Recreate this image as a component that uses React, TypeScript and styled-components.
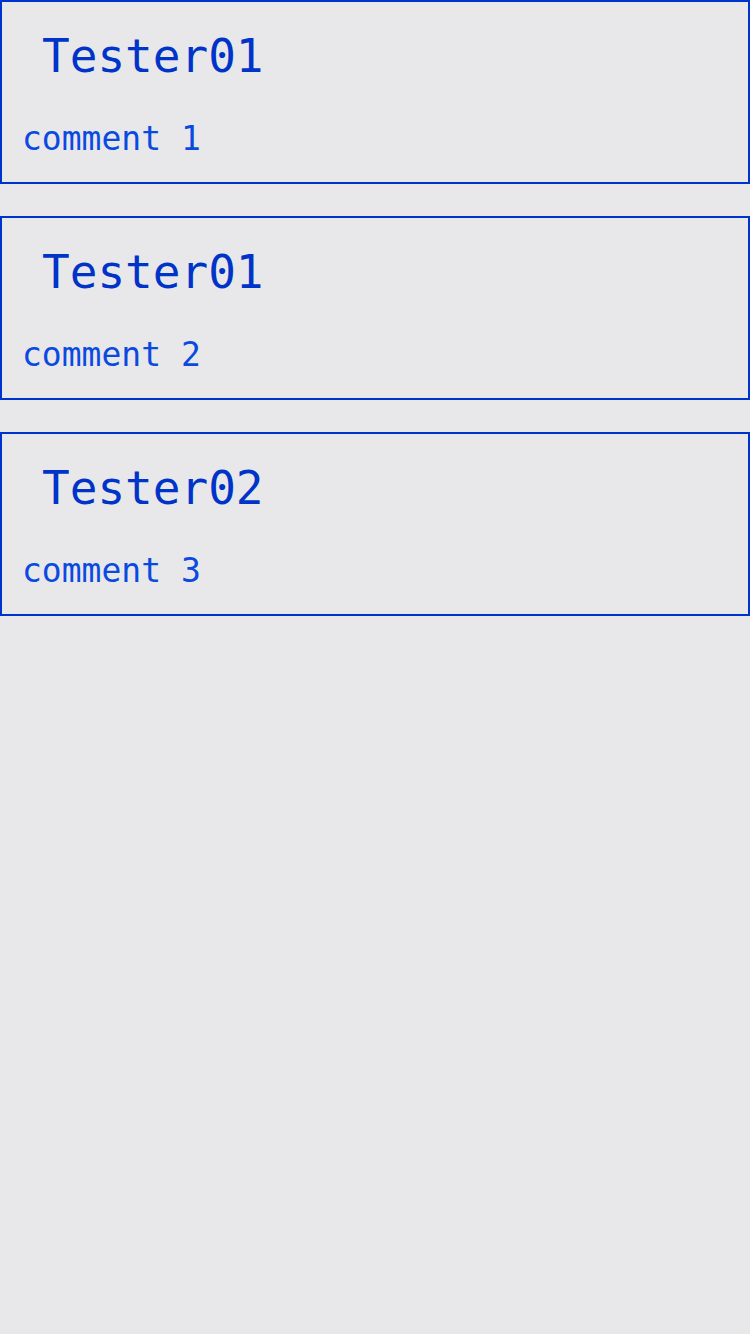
import React from "react";
import styled, { createGlobalStyle } from "styled-components";

const GlobalStyle = createGlobalStyle`
  html, body {
    margin: 0;
    padding: 0;
    background: #e8e8ea;
  }
  body {
    font-family: "DejaVu Sans Mono", monospace;
    min-height: 1334px;
  }
`;

const List = styled.div`
  display: flex;
  flex-direction: column;
  gap: 32px;
  width: 750px;
`;

const Card = styled.div`
  box-sizing: border-box;
  height: 184px;
  border: 2px solid #0033cc;
  padding: 27px 20px 0 20px;
  display: flex;
  flex-direction: column;
`;

const Title = styled.h2`
  margin: 0;
  padding-left: 20px;
  font-family: "DejaVu Sans Mono", monospace;
  font-weight: normal;
  font-size: 46px;
  line-height: 54px;
  color: #0033c8;
`;

const Comment = styled.p`
  margin: 37px 0 0 0;
  font-family: "DejaVu Sans Mono", monospace;
  font-size: 33px;
  line-height: 38px;
  color: #0a4ae0;
`;

const comments = [
  { user: "Tester01", text: "comment 1" },
  { user: "Tester01", text: "comment 2" },
  { user: "Tester02", text: "comment 3" },
];

export default function App() {
  return (
    <>
      <GlobalStyle />
      <List>
        {comments.map((c, i) => (
          <Card key={i}>
            <Title>{c.user}</Title>
            <Comment>{c.text}</Comment>
          </Card>
        ))}
      </List>
    </>
  );
}
